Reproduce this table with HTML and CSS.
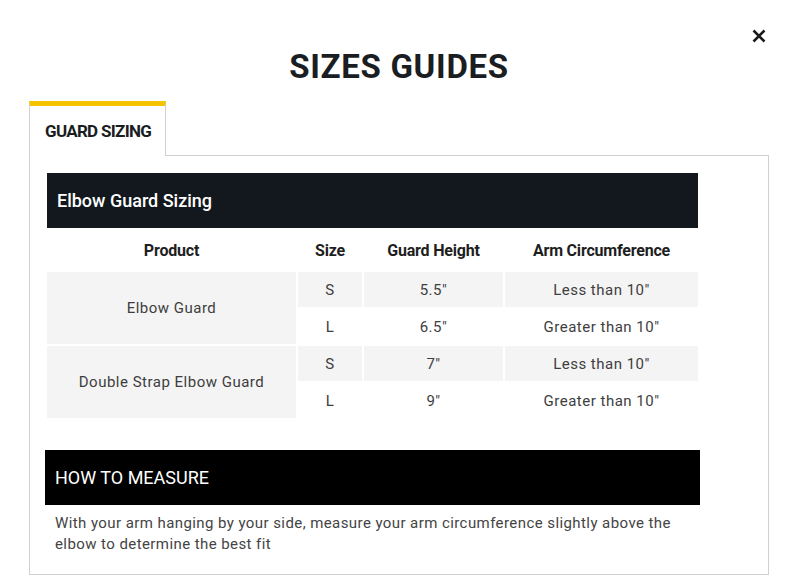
FILE: index.html
```html
<!DOCTYPE html>
<html>
<head>
<meta charset="utf-8">
<link rel="stylesheet" href="styles.css">
</head>
<body>
<div class="modal">
  <button class="close" aria-label="Close">
    <svg width="14" height="14" viewBox="0 0 14 14"><path d="M1.5 1.5 L12.5 12.5 M12.5 1.5 L1.5 12.5" stroke="#1a1a1a" stroke-width="2.5" fill="none"/></svg>
  </button>
  <h1 class="title">SIZES GUIDES</h1>
  <div class="tabs">
    <div class="tab active">GUARD SIZING</div>
    <div class="tab-fill"></div>
  </div>
  <div class="panel">
    <table class="sizes">
      <colgroup>
        <col class="c-prod"><col class="c-size"><col class="c-height"><col class="c-arm">
      </colgroup>
      <tr><th class="caption" colspan="4">Elbow Guard Sizing</th></tr>
      <tr class="head">
        <th>Product</th>
        <th>Size</th>
        <th>Guard Height</th>
        <th>Arm Circumference</th>
      </tr>
      <tr class="shade">
        <td class="prod" rowspan="2">Elbow Guard</td>
        <td>S</td><td>5.5"</td><td>Less than 10"</td>
      </tr>
      <tr>
        <td>L</td><td>6.5"</td><td>Greater than 10"</td>
      </tr>
      <tr class="shade">
        <td class="prod" rowspan="2">Double Strap Elbow Guard</td>
        <td>S</td><td>7"</td><td>Less than 10"</td>
      </tr>
      <tr>
        <td>L</td><td>9"</td><td>Greater than 10"</td>
      </tr>
    </table>
    <div class="measure">
      <div class="measure-head">HOW TO MEASURE</div>
      <p class="measure-text">With your arm hanging by your side, measure your arm circumference slightly above the elbow to determine the best fit</p>
    </div>
  </div>
</div>
</body>
</html>
```
FILE: styles.css
```css
* { box-sizing: border-box; }
html, body { margin: 0; padding: 0; background: #fff; }
body { font-family: Roboto, "Liberation Sans", sans-serif; color: #333; }

.modal {
  position: relative;
  width: 796px;
  height: 576px;
  padding: 45px 27px 0 29px;
}
.close {
  position: absolute;
  top: 29px;
  left: 752px;
  width: 14px;
  height: 14px;
  padding: 0;
  border: 0;
  background: none;
  display: block;
}
.close svg { display: block; }

.title {
  margin: 0;
  height: 56px;
  text-align: center;
  font-weight: 700;
  font-size: 33px;
  line-height: 44px;
  letter-spacing: 0.7px;
  color: #1a1d21;
}

.tabs { display: flex; align-items: flex-end; }
.tab {
  width: 137px;
  height: 55px;
  border-top: 5px solid #f5c400;
  border-left: 1px solid #d0d0d0;
  border-right: 1px solid #d0d0d0;
  background: #fff;
  font-weight: 700;
  font-size: 17px;
  color: #1a1d21;
  padding: 15px 0 0 15px;
  letter-spacing: -0.7px;
}
.tab-fill { flex: 1; border-bottom: 1px solid #d0d0d0; }

.panel {
  border: 1px solid #d0d0d0;
  border-top: 0;
  height: 419px;
  padding: 15px 15px 0 15px;
}

.sizes {
  width: 655px;
  border-collapse: separate;
  border-spacing: 2px;
  margin: 0;
  table-layout: fixed;
  font-size: 15px;
  color: #3e3e3e;
}
.c-prod { width: 249px; }
.c-size { width: 64px; }
.c-height { width: 139px; }
.c-arm { width: 193px; }
.sizes th.caption {
  background: #12181e;
  color: #fff;
  height: 55px;
  text-align: left;
  padding: 0 0 0 10px;
  font-weight: 500;
  font-size: 18px;
}
.head th {
  height: 40px;
  font-weight: 700;
  font-size: 16px;
  color: #1e1e1e;
  text-align: center;
  padding: 0;
  letter-spacing: -0.2px;
}
.sizes td {
  height: 35px;
  text-align: center;
  padding: 0;
  letter-spacing: 0.5px;
}
.shade td { background: #f4f4f4; }
.sizes td.prod { background: #f4f4f4; }

.measure { margin-top: 30px; }
.measure-head {
  width: 655px;
  height: 55px;
  background: #000;
  color: #fff;
  font-size: 18px;
  line-height: 55px;
  padding-left: 10px;
}
.measure-text {
  margin: 8px 0 0 10px;
  width: 625px;
  font-size: 15px;
  line-height: 21px;
  letter-spacing: 0.42px;
  color: #444;
}
```
